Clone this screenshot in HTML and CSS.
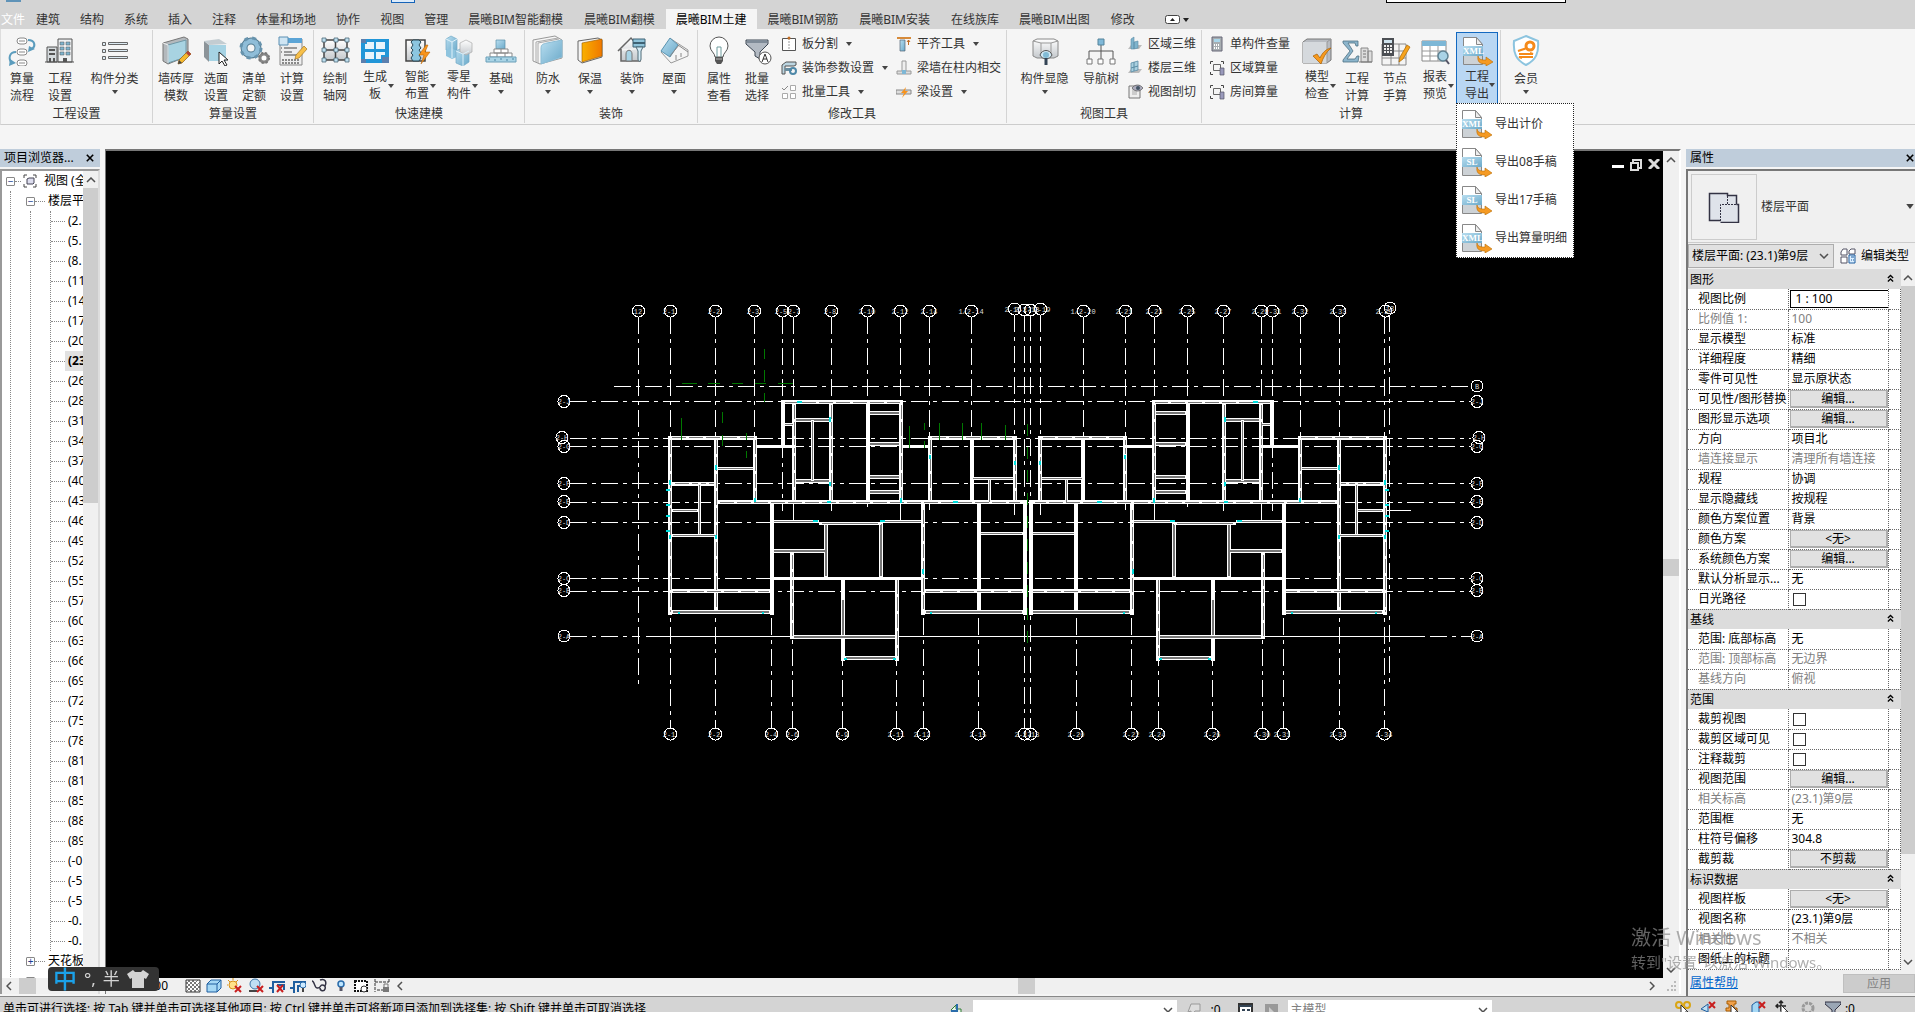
FILE: index.html
```html
<!DOCTYPE html>
<html lang="zh-CN">

<head>
    <meta charset="UTF-8">
    <meta name="viewport" content="width=device-width, initial-scale=1.0">
    <title>楼层平面: (23.1)第9层</title>
    <link rel="stylesheet" href="styles.css">
</head>

<body>
    <svg class="sprite" xmlns="http://www.w3.org/2000/svg">
        <defs>
            <linearGradient id="blue" x1="0" y1="0" x2="1" y2="1">
                <stop offset="0" stop-color="#b9def0" />
                <stop offset="1" stop-color="#6aa9c9" />
            </linearGradient>
            <linearGradient id="grey" x1="0" y1="0" x2="0" y2="1">
                <stop offset="0" stop-color="#fff" />
                <stop offset="1" stop-color="#c4c8cc" />
            </linearGradient>
            <linearGradient id="orange" x1="0" y1="0" x2="1" y2="0">
                <stop offset="0" stop-color="#f9b000" />
                <stop offset="1" stop-color="#f07800" />
            </linearGradient>
        </defs>

        <symbol id="flow" viewBox="0 0 32 32" fill="none">
            <g stroke="#888" fill="#fff"><rect x="11" y="4" width="10" height="6" rx="3" /><rect x="11" y="15" width="10" height="6" rx="3" /><rect x="11" y="26" width="10" height="6" rx="3" /></g>
            <path d="M13 7h6M13 18h6M13 29h6" stroke="#888" />
            <path d="M22 6c7 0 8 6 4 9M10 18c-7 0-8 7-4 11" stroke="#5b9cbd" stroke-width="2" />
            <path d="M29 15l-7 3 1-6zM10 29l-7 3 1-7z" fill="#5b9cbd" />
        </symbol>
        <symbol id="buildings" viewBox="0 0 32 32">
            <path d="M3 13h10v15H3z" fill="#d5dadd" stroke="#555" /><path d="M14 5h14v23H14z" fill="#eef1f3" stroke="#555" />
            <path d="M16 8h4v3h-4zM16 13h4v3h-4zM16 18h4v3h-4zM22 8h4v3h-4zM22 13h4v3h-4zM22 18h4v3h-4z" fill="#7db5d0" stroke="#555" stroke-width=".5" />
            <path d="M5 15h6v2H5zM5 19h6v2H5zM5 24h2v4H5zM9 24h2v4H9zM19 24h4v4h-4z" fill="#555" /><path d="M1 28h29" stroke="#555" />
        </symbol>
        <symbol id="list" viewBox="0 0 32 32">
            <g fill="#dceaf2" stroke="#666"><path d="M3.500 8.500h3v3h-3zM9.500 8.500h19v2h-19zM3.500 15.500h3v3h-3zM9.500 15.500h19v2h-19zM3.500 22.500h3v3h-3zM9.500 22.500h19v2h-19z" /></g>
        </symbol>
        <symbol id="wall" viewBox="0 0 32 32">
            <path d="M3 9l21-6 4 2v17l-20 8-5-3z" fill="#b4b9bd" stroke="#777" /><path d="M8 11l18-5v17L8 29z" fill="#a8d3e2" stroke="#6f97a6" /><path d="M3 9l5 2v18" fill="none" stroke="#eee" />
            <path d="M18 30l1-4 9-9 3 3-9 9z" fill="#f5b92e" stroke="#8a5a14" stroke-width=".7" /><path d="M18 30l1-4 3 3z" fill="#444" /><path d="M26 19l2-2 3 3-2 2z" fill="#b0403a" />
        </symbol>
        <symbol id="pickface" viewBox="0 0 32 32">
            <path d="M4 7l5 4v17l-5-5z" fill="#8c9499" /><path d="M4 7l15-2 8 5-18 1z" fill="#c3ccd1" /><path d="M9 11h17v16H9z" fill="#a6d3e4" />
            <path d="M19 18v12l3-3 3 5 2-1-3-5h4z" fill="#fff" stroke="#222" />
        </symbol>
        <symbol id="gears" viewBox="0 0 32 32">
            <circle cx="13" cy="14" r="7" fill="none" stroke="#537a90" stroke-width="7" /><circle cx="13" cy="14" r="7" fill="none" stroke="#8fbdd8" stroke-width="5" />
            <circle cx="13" cy="14" r="10" fill="none" stroke="#6793ad" stroke-width="3" stroke-dasharray="4 4" />
            <circle cx="26" cy="24" r="4" fill="#fff" stroke="#888" stroke-width="3" /><circle cx="26" cy="24" r="5" fill="none" stroke="#777" stroke-width="2" stroke-dasharray="2 2" />
        </symbol>
        <symbol id="calcset" viewBox="0 0 32 32">
            <path d="M4 5h22v26H4z" fill="#eee" stroke="#888" /><path d="M4 4h22v5H4z" fill="#5ba4d6" /><path d="M3 3h9v8H3z" fill="#cfe5f3" stroke="#5b8fb3" />
            <path d="M8 14h13M8 18h8M8 21h13M5 14h1M5 18h1" stroke="#999" stroke-width="2" /><path d="M6 26h18M6 29h18" stroke="#888" stroke-width="2" stroke-dasharray="2 1" />
            <path d="M19 25l1-4 8-9 3 3-8 9z" fill="#f7c04a" stroke="#a37420" stroke-width=".7" />
        </symbol>
        <symbol id="axisgrid" viewBox="0 0 32 32">
            <path d="M5 6h23v20H5zM16.500 6v20M5 16h23" fill="url(#grey)" stroke="#444" stroke-width="1.500" />
            <g fill="#bfe0f0" stroke="#4b6876" stroke-width=".8"><path d="M3 4h4v4H3zM15 4h4v4h-4zM26 4h4v4h-4zM3 14h4v4H3zM15 14h4v4h-4zM26 14h4v4h-4zM3 24h4v4H3zM15 24h4v4h-4zM26 24h4v4h-4z" /></g>
        </symbol>
        <symbol id="slab" viewBox="0 0 32 32">
            <path d="M2 5h28v24H2z" fill="#2196d8" /><path d="M2 5h5v4H2zM2 25h5v4H2zM23 23h7v6h-7z" fill="#5b7fae" />
            <path d="M8 8h7v7H6v-5h2zM17 8h9v7h-9zM6 18h9v7H6zM17 18h9v3h-4v4h-5z" fill="#e8f4fb" />
        </symbol>
        <symbol id="smart" viewBox="0 0 32 32">
            <path d="M5 6h19v21H5z" fill="url(#grey)" stroke="#444" stroke-width="1.500" /><path d="M12 6h6l2 2-2 3 2 3-2 2 2 3-2 2 2 3-2 3h-6l-2-3 2-3-2-2 2-3-2-2 2-3-2-3z" fill="#8cc6e0" stroke="#2b4a58" />
            <path d="M25 11l-7 10h5l-3 9 9-12h-5l3-7z" fill="#f7941d" stroke="#b35e00" stroke-width=".5" />
        </symbol>
        <symbol id="pieces" viewBox="0 0 32 32">
            <path d="M3 5l5-3 6 3v11l-5 3-6-3z" fill="url(#blue)" stroke="#72abc7" stroke-width=".7" /><path d="M3 16l5-2 6 3v6l-5 2-6-3z" fill="#8fc4de" />
            <path d="M13 17l6-3 7 3v11l-6 4-7-3z" fill="url(#blue)" stroke="#72abc7" stroke-width=".7" /><path d="M17 9l6-3 6 3v9l-6 3-6-3z" fill="url(#grey)" stroke="#aaa" stroke-width=".7" /><path d="M3 5l6 3 5-3M9 8v16M13 17l7 3 6-3M20 20v12" stroke="#dff1fa" fill="none" />
        </symbol>
        <symbol id="foundation" viewBox="0 0 32 32">
            <path d="M11 6h9v9h-9z" fill="url(#blue)" stroke="#5a8fa9" stroke-width=".7" /><path d="M9 15h14v4H9zM5 19h22v4H5z" fill="#fff" stroke="#888" /><path d="M16 15v4M12 19v4M20 19v4" stroke="#888" />
            <path d="M1 23h30v5H1z" fill="#a9d4e6" stroke="#6a9fb8" /><path d="M3 25h2m4 1h2m4-1h2m4 1h2m4-1h2" stroke="#4b86a4" />
        </symbol>
        <symbol id="waterproof" viewBox="0 0 32 32">
            <path d="M1 6l22-4 7 4v18L8 30l-7-3z" fill="#f7f7f7" stroke="#999" /><path d="M4 8l22-4M4 8v20M6 9l21-4M6 9v20" stroke="#aaa" fill="none" /><path d="M9 15c0-5 2-5 6-6l15-3v17L9 30z" fill="url(#blue)" stroke="#8bbdd6" />
        </symbol>
        <symbol id="insulate" viewBox="0 0 32 32">
            <path d="M4 7l20-3 4 2v17L8 29l-4-3z" fill="#f4f4f4" stroke="#666" /><path d="M8 9l20-4v17L8 28z" fill="url(#orange)" stroke="#9a5a00" stroke-width=".6" />
        </symbol>
        <symbol id="decor" viewBox="0 0 32 32">
            <path d="M2 17L15 4l10 11M5 15v12h19V14" fill="url(#grey)" stroke="#666" stroke-width="1.500" /><path d="M10 27v-7c0-5 6-5 6 0v7z" fill="#a9d4e6" stroke="#777" />
            <path d="M17 5h12v8H17z" fill="#8fc3da" stroke="#3f6274" /><path d="M17 9h12" stroke="#3f6274" stroke-width="2" /><path d="M20 13h7l-2 4v8c0 3-3 3-3 0v-8z" fill="#d7edf7" stroke="#4f6a77" />
        </symbol>
        <symbol id="roof" viewBox="0 0 32 32">
            <path d="M3 18l10 11 17-7v-6L13 5z" fill="#f5f5f5" stroke="#999" /><path d="M3 17L12 4l8 7-8 12z" fill="url(#blue)" stroke="#5a93b0" /><path d="M20 11l10 7M12 22l9-11M18 21v5M23 19v4" stroke="#888" fill="none" />
        </symbol>
        <symbol id="bulb" viewBox="0 0 32 32">
            <path d="M12 23c0-4-5-6-5-11a9 9 0 0118 0c0 5-5 7-5 11z" fill="#fff" stroke="#555" /><path d="M14 23V13h4v10" fill="none" stroke="#6f9c9e" /><path d="M12 23h8v4l-2 3h-4l-2-3z" fill="#555" /><path d="M13 25h6" stroke="#bbb" />
        </symbol>
        <symbol id="filterA" viewBox="0 0 32 32">
            <path d="M5 6h22v4l-8 8v7l-5-3v-4L5 10z" fill="#b3bac3" stroke="#3c4652" /><path d="M6 6h20v3H6z" fill="#7f8b98" />
            <circle cx="24" cy="24" r="6" fill="#fff" stroke="#555" /><path d="M21 28l3-8 3 8M22 25h4" fill="none" stroke="#333" />
        </symbol>
        <symbol id="showhide" viewBox="0 0 32 32">
            <path d="M4 7l4-2h17l4 2v15l-4 2H8l-4-2z" fill="url(#grey)" stroke="#888" /><path d="M4 7l8 2h10l7-2M12 9v13M22 9v13" stroke="#999" fill="none" />
            <path d="M11 21c2-6 10-6 12 0-2 5-10 5-12 0z" fill="#cfe8f4" stroke="#555" /><circle cx="17" cy="21" r="3" fill="#82bbd5" /><path d="M17 24v7" stroke="#345" stroke-width="3" />
        </symbol>
        <symbol id="navtree" viewBox="0 0 32 32">
            <path d="M16 11v6M4 25v-8h24v8M16 17v8" fill="none" stroke="#555" /><path d="M13 5h6v6h-6z" fill="#7fb8d8" stroke="#55839a" /><path d="M2 25h5v5H2zM13 25h5v5h-5zM25 25h5v5h-5z" fill="#fff" stroke="#777" />
        </symbol>
        <symbol id="modelcheck" viewBox="0 0 32 32">
            <path d="M2 8l4-3h24v21l-4 3H2z" fill="#b8bcc2" stroke="#777" /><path d="M2 8h24v21H2z" fill="#d5d9dd" /><path d="M26 8v21M26 8l4-3" stroke="#999" /><path d="M12 22l4-2 3 4c2-5 6-9 11-10-5 4-8 10-10 16z" fill="#f79a1e" stroke="#a85d00" stroke-width=".7" />
        </symbol>
        <symbol id="sigma" viewBox="0 0 32 32">
            <path d="M2 7h15v5h-2l-1-3H7l5 8-6 8h8l2-3h2l-1 6H2v-2l7-9-7-8z" fill="#8cb5cc" stroke="#4f7183" stroke-width=".8" />
            <path d="M20 14h7v14h-7zM27 17h4v11h-4z" fill="#ddd" stroke="#888" /><path d="M22 17h3M22 20h3M22 23h3" stroke="#777" /><path d="M18 28h13" stroke="#777" />
        </symbol>
        <symbol id="handcalc" viewBox="0 0 32 32">
            <path d="M3 10h24v21H3zM3 17h24M3 24h24M12 10v21M20 10v21" fill="#f4f4f4" stroke="#888" /><path d="M3 4h12v18H3z" fill="#4c4f54" /><path d="M5 6h8v3H5z" fill="#cfe3ee" /><path d="M5 12h8M5 15h8M5 18h8" stroke="#eee" stroke-width="2" stroke-dasharray="2 1" />
            <path d="M20 28l1-5 7-12 3 2-7 12z" fill="#f7a41e" stroke="#a86500" stroke-width=".7" />
        </symbol>
        <symbol id="report" viewBox="0 0 32 32">
            <path d="M3 7h24v20H3z" fill="#fff" stroke="#888" /><path d="M3 7h24v5H3z" fill="#7db7d6" /><path d="M3 17h24M3 22h24M11 12v15M19 12v15" stroke="#999" /><circle cx="24" cy="22" r="5" fill="#a9d3e6" stroke="#5f8292" stroke-width="1.500" /><path d="M27 26l3 4" stroke="#556" stroke-width="2" />
        </symbol>
        <symbol id="doc" viewBox="0 0 32 32">
            <path d="M2.500 3.500h13l6 7v20h-19z" fill="#fff" stroke="#888" /><path d="M15.500 3.500v7h6z" fill="#eee" stroke="#888" /><path d="M3 22h18v8H3z" fill="#cdd2d6" />
            <path d="M2 12h20v10H2z" fill="url(#blue)" /><path d="M17 22c1 4 4 4 8 4v-3l7 5-7 4v-2c-6 0-9-2-8-8z" fill="#f59a23" stroke="#b86b00" stroke-width=".6" />
        </symbol>
        <symbol id="member" viewBox="0 0 32 32">
            <path d="M16 2l12 5c1 12-2 19-12 24C6 26 3 19 4 7z" fill="#fff" stroke="#8cc4df" stroke-width="2" /><circle cx="20" cy="12" r="4" fill="none" stroke="#f58a1a" stroke-width="3" /><path d="M17 14l-9 3M9 20h14l-3-1M23 23H9l3 1" stroke="#f58a1a" stroke-width="2" fill="none" />
        </symbol>

        <symbol id="s-split" viewBox="0 0 16 16"><path d="M1.500 2.500h13v12h-13z" fill="#fff" stroke="#555" /><path d="M8 2v12" stroke="#999" stroke-dasharray="2 1" /><circle cx="8" cy="2" r="1.500" fill="#c06a20" /></symbol>
        <symbol id="s-param" viewBox="0 0 16 16"><path d="M1 5l4-3h10v3l-2 1H4v8H1z" fill="#bcd6e2" stroke="#555" /><path d="M4 8h7v3H4z" fill="#6a8ea0" /><circle cx="12" cy="11" r="3" fill="none" stroke="#4e88a8" stroke-width="2" /></symbol>
        <symbol id="s-batch" viewBox="0 0 16 16"><path d="M9.500 1.500h5v5h-5zM1.500 9.500h5v5h-5zM9.500 9.500h5v5h-5z" fill="#fff" stroke="#aaa" /><path d="M1 4l2 2 4-4" fill="none" stroke="#888" /></symbol>
        <symbol id="s-align" viewBox="0 0 16 16"><path d="M1 1h14v2H1z" fill="#d68a3a" /><path d="M4 4h5v11H4z" fill="url(#blue)" stroke="#567" stroke-width=".7" /><path d="M12.500 9V4M11 6l1.500-2L14 6" fill="none" stroke="#c06a20" /></symbol>
        <symbol id="s-cross" viewBox="0 0 16 16"><path d="M6 1h4v10H6z" fill="#eee" stroke="#999" /><path d="M1 11h14v3H1z" fill="#ddd" stroke="#999" /><path d="M6 10h4v4H6z" fill="#7db7d6" /></symbol>
        <symbol id="s-beam" viewBox="0 0 16 16"><path d="M0 6h15v4H0z" fill="#ddd" stroke="#888" /><path d="M10 3L5 9h3l-2 5 6-7H9z" fill="#f79420" /></symbol>
        <symbol id="s-area3d" viewBox="0 0 16 16"><path d="M1 13l3-4h11l-3 4z" fill="#bbb" /><path d="M4 3l3-2v12H4zM7 6l4-1v7l-4 1z" fill="#7fb4cd" stroke="#5a8ca4" stroke-width=".6" /></symbol>
        <symbol id="s-floor3d" viewBox="0 0 16 16"><path d="M1 13l3-4h11l-3 4z" fill="#bbb" /><path d="M4 3l7-2v9l-7 2z" fill="#a9d0e0" stroke="#5a8ca4" stroke-width=".8" /><path d="M4 8l7-2M7 2v9" stroke="#5a8ca4" /></symbol>
        <symbol id="s-cut" viewBox="0 0 16 16"><path d="M2 2h11v12H2z" fill="#eee" stroke="#777" /><path d="M5 5h5v6H5z" fill="#ccc" /><path d="M5 4c3-4 8-4 11 0-3 4-8 4-11 0z" fill="#aab" stroke="#555" stroke-width=".7" /><circle cx="11" cy="4" r="2" fill="#456" /></symbol>
        <symbol id="s-calc" viewBox="0 0 16 16"><path d="M3 1h10v14H3z" fill="#a7adb1" stroke="#667" /><path d="M5 3h6v3H5z" fill="#a9d6ea" /><path d="M5 9h6M5 12h6" stroke="#fff" stroke-width="2" stroke-dasharray="1 1" /></symbol>
        <symbol id="s-areacalc" viewBox="0 0 16 16"><path d="M1.500 4V1.500H4M12 1.500h2.500V4M1.500 12v2.500H4" fill="none" stroke="#444" /><path d="M4.500 4.500h7v6h-7z" fill="none" stroke="#666" /><path d="M11 8h4v7h-4z" fill="#99b" stroke="#556" stroke-width=".7" /></symbol>

        <symbol id="caret" viewBox="0 0 6 4"><path d="M0 0h6L3 4z" fill="#444" /></symbol>
        <symbol id="chev" viewBox="0 0 10 6"><path d="M1 5l4-4 4 4" fill="none" stroke="#505050" stroke-width="1.500" /></symbol>
        <symbol id="cross" viewBox="0 0 10 10"><path d="M1 1l8 8M9 1l-8 8" stroke="currentColor" stroke-width="2" /></symbol>
        <symbol id="collapse" viewBox="0 0 8 9"><path d="M1 4l3-3 3 3M1 8l3-3 3 3" fill="none" stroke="#000" stroke-width="1.500" /></symbol>
        <symbol id="pointer" viewBox="0 0 16 16"><path d="M6 5v10l2-2 2 3 2-1-2-3h3z" fill="#fff" stroke="#333" /></symbol>
    </svg>

    <header>
        <div class="quickbar">
            <span class="quick-logo"></span>
            <span class="quick-active"></span>
            <span class="quick-search"></span>
        </div>
        <nav class="tabs">
            <a class="tab file" href="#">文件</a>
            <a class="tab" href="#">建筑</a>
            <a class="tab" href="#">结构</a>
            <a class="tab" href="#">系统</a>
            <a class="tab" href="#">插入</a>
            <a class="tab" href="#">注释</a>
            <a class="tab" href="#">体量和场地</a>
            <a class="tab" href="#">协作</a>
            <a class="tab" href="#">视图</a>
            <a class="tab" href="#">管理</a>
            <a class="tab bim" href="#">晨曦BIM智能翻模</a>
            <a class="tab bim" href="#">晨曦BIM翻模</a>
            <a class="tab bim active" href="#">晨曦BIM土建</a>
            <a class="tab bim" href="#">晨曦BIM钢筋</a>
            <a class="tab bim" href="#">晨曦BIM安装</a>
            <a class="tab" href="#">在线族库</a>
            <a class="tab bim" href="#">晨曦BIM出图</a>
            <a class="tab" href="#">修改</a>
            <button class="ribbon-toggle" aria-label="最小化功能区">
                <svg width="24" height="9" viewBox="0 0 24 9"><rect x=".5" y=".5" width="14" height="8" rx="2" fill="#fff" stroke="#444" /><path d="M5 6h5L7.500 3zM18 3h6l-3 4z" fill="#222" /></svg>
            </button>
        </nav>

        <div class="ribbon">
            <section class="panel">
                <div class="tools">
                    <button class="big"><svg><use href="#flow" /></svg><span>算量<br>流程</span></button>
                    <button class="big"><svg><use href="#buildings" /></svg><span>工程<br>设置</span></button>
                    <button class="big xwide"><svg><use href="#list" /></svg><span>构件分类</span><svg class="caret"><use href="#caret" /></svg></button>
                </div>
                <h2>工程设置</h2>
            </section>
            <section class="panel">
                <div class="tools">
                    <button class="big drop"><svg><use href="#wall" /></svg><span>墙砖厚<br>模数</span></button>
                    <button class="big"><svg><use href="#pickface" /></svg><span>选面<br>设置</span></button>
                    <button class="big"><svg><use href="#gears" /></svg><span>清单<br>定额</span></button>
                    <button class="big"><svg><use href="#calcset" /></svg><span>计算<br>设置</span></button>
                </div>
                <h2>算量设置</h2>
            </section>
            <section class="panel">
                <div class="tools">
                    <button class="big"><svg><use href="#axisgrid" /></svg><span>绘制<br>轴网</span></button>
                    <button class="big drop split"><svg><use href="#slab" /></svg><span>生成<br>板</span><svg class="caret"><use href="#caret" /></svg></button>
                    <button class="big drop split"><svg><use href="#smart" /></svg><span>智能<br>布置</span><svg class="caret"><use href="#caret" /></svg></button>
                    <button class="big drop split"><svg><use href="#pieces" /></svg><span>零星<br>构件</span><svg class="caret"><use href="#caret" /></svg></button>
                    <button class="big drop"><svg><use href="#foundation" /></svg><span>基础</span><svg class="caret"><use href="#caret" /></svg></button>
                </div>
                <h2>快速建模</h2>
            </section>
            <section class="panel">
                <div class="tools">
                    <button class="big drop"><svg><use href="#waterproof" /></svg><span>防水</span><svg class="caret"><use href="#caret" /></svg></button>
                    <button class="big drop"><svg><use href="#insulate" /></svg><span>保温</span><svg class="caret"><use href="#caret" /></svg></button>
                    <button class="big drop"><svg><use href="#decor" /></svg><span>装饰</span><svg class="caret"><use href="#caret" /></svg></button>
                    <button class="big drop"><svg><use href="#roof" /></svg><span>屋面</span><svg class="caret"><use href="#caret" /></svg></button>
                </div>
                <h2>装饰</h2>
            </section>
            <section class="panel">
                <div class="tools">
                    <button class="big"><svg><use href="#bulb" /></svg><span>属性<br>查看</span></button>
                    <button class="big"><svg><use href="#filterA" /></svg><span>批量<br>选择</span></button>
                    <div class="stack">
                        <button><svg><use href="#s-split" /></svg>板分割<svg class="caret"><use href="#caret" /></svg></button>
                        <button><svg><use href="#s-param" /></svg>装饰参数设置<svg class="caret"><use href="#caret" /></svg></button>
                        <button><svg><use href="#s-batch" /></svg>批量工具<svg class="caret"><use href="#caret" /></svg></button>
                    </div>
                    <div class="stack">
                        <button><svg><use href="#s-align" /></svg>平齐工具<svg class="caret"><use href="#caret" /></svg></button>
                        <button><svg><use href="#s-cross" /></svg>梁墙在柱内相交</button>
                        <button><svg><use href="#s-beam" /></svg>梁设置<svg class="caret"><use href="#caret" /></svg></button>
                    </div>
                </div>
                <h2>修改工具</h2>
            </section>
            <section class="panel">
                <div class="tools">
                    <button class="big xwide"><svg><use href="#showhide" /></svg><span>构件显隐</span><svg class="caret"><use href="#caret" /></svg></button>
                    <button class="big drop"><svg><use href="#navtree" /></svg><span>导航树</span></button>
                    <div class="stack">
                        <button><svg><use href="#s-area3d" /></svg>区域三维</button>
                        <button><svg><use href="#s-floor3d" /></svg>楼层三维</button>
                        <button><svg><use href="#s-cut" /></svg>视图剖切</button>
                    </div>
                </div>
                <h2>视图工具</h2>
            </section>
            <section class="panel">
                <div class="tools">
                    <div class="stack lead">
                        <button><svg><use href="#s-calc" /></svg>单构件查量</button>
                        <button><svg><use href="#s-areacalc" /></svg>区域算量</button>
                        <button><svg><use href="#s-areacalc" /></svg>房间算量</button>
                    </div>
                    <button class="big drop split"><svg><use href="#modelcheck" /></svg><span>模型<br>检查</span><svg class="caret"><use href="#caret" /></svg></button>
                    <button class="big"><svg><use href="#sigma" /></svg><span>工程<br>计算</span></button>
                    <button class="big"><svg><use href="#handcalc" /></svg><span>节点<br>手算</span></button>
                    <button class="big drop split"><svg><use href="#report" /></svg><span>报表<br>预览</span><svg class="caret"><use href="#caret" /></svg></button>
                    <div class="menu-anchor">
                        <button class="big drop split open" aria-expanded="true"><span class="doc"><svg><use href="#doc" /></svg><b>XML</b></span><span>工程<br>导出</span><svg class="caret"><use href="#caret" /></svg></button>
                        <div class="export-menu">
                            <button><span class="doc"><svg><use href="#doc" /></svg><b>XML</b></span>导出计价</button>
                            <button><span class="doc"><svg><use href="#doc" /></svg><b>SL</b></span>导出08手稿</button>
                            <button><span class="doc"><svg><use href="#doc" /></svg><b>SL</b></span>导出17手稿</button>
                            <button><span class="doc"><svg><use href="#doc" /></svg><b>XML</b></span>导出算量明细</button>
                        </div>
                    </div>
                </div>
                <h2>计算</h2>
            </section>
            <section class="panel last">
                <div class="tools">
                    <button class="big drop"><svg><use href="#member" /></svg><span>会员</span><svg class="caret"><use href="#caret" /></svg></button>
                </div>
            </section>
        </div>
    </header>

    <main>
        <aside class="dock browser">
            <div class="dock-title"><span>项目浏览器...</span><button aria-label="关闭"><svg width="8" height="8"><use href="#cross" /></svg></button></div>
            <div class="browser-box">
                <div class="tree">
                    <div class="node root"><i class="box">−</i><i class="dots"></i><svg width="14" height="14" viewBox="0 0 14 14"><path d="M1 4V1h3M10 1h3v3M1 10v3h3M13 10v3h-3" fill="none" stroke="#444" /><path d="M4 5l2-1h5v5l-1 1H4z" fill="#dde" stroke="#445" /></svg><span>视图 (全</span></div>
                    <div class="level1">
                        <div class="node"><i class="box">−</i><i class="dots"></i><span>楼层平</span></div>
                        <div class="branch">
                            <ul>
                                <li>(2.</li>
                                <li>(5.</li>
                                <li>(8.</li>
                                <li>(11</li>
                                <li>(14</li>
                                <li>(17</li>
                                <li>(20</li>
                                <li class="current"><span>(23</span></li>
                                <li>(26</li>
                                <li>(28</li>
                                <li>(31</li>
                                <li>(34</li>
                                <li>(37</li>
                                <li>(40</li>
                                <li>(43</li>
                                <li>(46</li>
                                <li>(49</li>
                                <li>(52</li>
                                <li>(55</li>
                                <li>(57</li>
                                <li>(60</li>
                                <li>(63</li>
                                <li>(66</li>
                                <li>(69</li>
                                <li>(72</li>
                                <li>(75</li>
                                <li>(78</li>
                                <li>(81</li>
                                <li>(81</li>
                                <li>(85</li>
                                <li>(88</li>
                                <li>(89</li>
                                <li>(-0</li>
                                <li>(-5</li>
                                <li>(-5</li>
                                <li>-0.</li>
                                <li>-0.</li>
                            </ul>
                        </div>
                        <div class="node"><i class="box">+</i><i class="dots"></i><span>天花板</span></div>
                        <div class="node"><i class="box"></i></div>
                    </div>
                </div>
                <div class="vscroll tree-scroll"><svg class="arrow"><use href="#chev" /></svg><i class="thumb"></i></div>
                <div class="tree-hscroll"><svg class="arrow left"><use href="#chev" /></svg><i class="thumb"></i></div>
            </div>
        </aside>

        <section class="view">
            <div class="canvas">
                <svg class="plan" viewBox="106 151 1557 827" shape-rendering="crispEdges">
                    <!-- grid axes -->
                    <g class="axis">
                        <g id="axisHalf">
                            <path d="M670.500 317V728M715.500 317V728M754.500 317V440M782.500 317V511M793.500 317V520M831.500 317V511M867.500 317V507M900.500 317V520M929.500 317V510M971.500 317V440M1014.500 315V515M1024.500 315V728" />
                            <path d="M771.500 728V503M792.500 728V551M842.500 728V578M896.500 728V578M923.500 728V503M978.500 728V503" />
                        </g>
                        <use href="#axisHalf" transform="matrix(-1 0 0 1 2055 0)" />
                        <path d="M638.500 317V684M1389.500 315V684" />
                        <path d="M614 386.500H1470M570 401.500H1471M570 438.500H1471M570 446.500H1471M570 483.500H1471M570 502.500H1471M570 522.500H1471M570 578.500H1471M570 591.500H1471M570 636.500H640M1430 636.500H1471" />
                    </g>
                    <path d="M646 636.500H1425M1356 510.500H1411" stroke="#fff" />

                    <!-- walls, left unit mirrored to the right -->
                    <g id="unit" fill="none">
                        <path id="outer" stroke="#fff" stroke-width="4" d="M670 436V615M716 436V613M755 436V502M783 400V447M794 402V502M831 402V502M867.500 402V502M901 400V502M930 436V502M972 438V502M1015 436V502M1024.500 500V615M771.500 503V615M923 503V615M979 503V613M792 551V638M842.500 578V661M897 578V661M781 402H903M668 437.500H757M928 437.500H1017M716 502H1026M671 483.500H716M670 591H771M923 591H1024M670 612H771M923 612H1024M790 637H899M843 658H899M794 419.500H831M868 412.500H901M868 443.500H901M868 477H901M868 491.500H901M794 481H831M826 522V578M881 522V578M771 551H827" />
                        <path class="core" d="M670 440V612M716 440V610M755 440V500M794 405V500M831 405V500M901 405V500M930 440V500M1015 440V500M923 510V610M792 555V636M897 580V656M785 402H900M672 437.500H754M932 437.500H1012M720 502H1020M675 483.500H714M673 591H769M926 591H1022M771 578.500H922" />
                        <path stroke="#777" stroke-width="2" d="M673 612H769M926 612H1022M794 637H895M846 658H895M796 419.500H829M870 412.500H899M870 443.500H899M870 477H899M870 491.500H899M796 481H829M826 524V576M881 524V576M774 551H825M842.500 600V635" />
                        <path stroke="#fff" stroke-width="3" d="M699 483V535M812.500 420V481M989 478V502M784 424H793M717 468.500H754M972 478.500H1014M672 510.500H698M671 535.500H716M771 521.500H819M880 521.500H923M819 523.500H881M979 533.500H1024M756 446.500H795M902 446.500H930M771 578.500H922" />
                        <path stroke="#777" d="M699 485V534M812.500 421V480M989 480V502M785 424.500H793M718 468.500H753M973 478.500H1013M673 510.500H697M673 535.500H715M774 521.500H817M884 521.500H921M822 523.500H878M981 533.500H1022" />
                        <path stroke="#00dede" stroke-width="2" d="M797 402H802M716 465V470M755 498V502M670 480V485M670 535V539M716 535V539M830 417V422M830 482V486M827 502H831M953 502H958M901 498V503M813 521H818M880 521H885M930 455V459M1015 461V465M666 489.500H670M666 504.500H670M666 515.500H670M666 530.500H670M678 613H680M762 613H764M930 613H932M844 659H847M893 659H896M922.500 569V574" />
                    </g>
                    <use href="#unit" transform="matrix(-1 0 0 1 2055 0)" />

                    <path stroke="#007800" fill="none" d="M682 383.500H697M708 383.500H720M732 383.500H743M755 383.500H766M778 383.500H793M764.500 349V359M764.500 370V382M764.500 393V402M681.500 418V440M722.500 412V423M722.500 435V446M746.500 433V440M746.500 451V458M909.500 426V448M924.500 423V430M924.500 441V448M939.500 423V440M962.500 423V440M981.500 423V440M1005.500 425V440" />
                    <path stroke="#007800" stroke-dasharray="12 11" d="M1027.500 424V650" />

                    <!-- axis bubbles -->
                    <g class="bubbles">
                        <path d="M632.500 311a6 6 0 1012 0 6 6 0 10-12 0M664.500 311a6 6 0 1012 0 6 6 0 10-12 0M709.500 311a6 6 0 1012 0 6 6 0 10-12 0M748.500 311a6 6 0 1012 0 6 6 0 10-12 0M776.500 311a6 6 0 1012 0 6 6 0 10-12 0M787.500 311a6 6 0 1012 0 6 6 0 10-12 0M825.500 311a6 6 0 1012 0 6 6 0 10-12 0M861.500 311a6 6 0 1012 0 6 6 0 10-12 0M894.500 311a6 6 0 1012 0 6 6 0 10-12 0M923.500 311a6 6 0 1012 0 6 6 0 10-12 0M965.500 311a6 6 0 1012 0 6 6 0 10-12 0M1008.500 309a6 6 0 1012 0 6 6 0 10-12 0M1018.500 310a6 6 0 1012 0 6 6 0 10-12 0" />
                        <path d="M1024.500 310a6 6 0 1012 0 6 6 0 10-12 0M1034.500 309a6 6 0 1012 0 6 6 0 10-12 0M1077.500 311a6 6 0 1012 0 6 6 0 10-12 0M1119.500 311a6 6 0 1012 0 6 6 0 10-12 0M1148.500 311a6 6 0 1012 0 6 6 0 10-12 0M1181.500 311a6 6 0 1012 0 6 6 0 10-12 0M1217.500 311a6 6 0 1012 0 6 6 0 10-12 0M1255.500 311a6 6 0 1012 0 6 6 0 10-12 0M1266.500 311a6 6 0 1012 0 6 6 0 10-12 0M1294.500 311a6 6 0 1012 0 6 6 0 10-12 0M1333.500 311a6 6 0 1012 0 6 6 0 10-12 0M1379.500 311a6 6 0 1012 0 6 6 0 10-12 0M1384 308a6 6 0 1012 0 6 6 0 10-12 0" />
                        <g id="bottomBubbles"><path d="M664.500 734a6 6 0 1012 0 6 6 0 10-12 0M709.500 734a6 6 0 1012 0 6 6 0 10-12 0M765.500 734a6 6 0 1012 0 6 6 0 10-12 0M786.500 734a6 6 0 1012 0 6 6 0 10-12 0M836.500 734a6 6 0 1012 0 6 6 0 10-12 0M890.500 734a6 6 0 1012 0 6 6 0 10-12 0M917.500 734a6 6 0 1012 0 6 6 0 10-12 0M972.500 734a6 6 0 1012 0 6 6 0 10-12 0M1018.500 734a6 6 0 1012 0 6 6 0 10-12 0" /></g>
                        <use href="#bottomBubbles" transform="matrix(-1 0 0 1 2055 0)" />
                        <path id="rowBubbles" d="M558 401.500a6 6 0 1012 0 6 6 0 10-12 0M556 437.500a6 6 0 1012 0 6 6 0 10-12 0M558 446.500a6 6 0 1012 0 6 6 0 10-12 0M558 483.500a6 6 0 1012 0 6 6 0 10-12 0M558 501.500a6 6 0 1012 0 6 6 0 10-12 0M558 522.500a6 6 0 1012 0 6 6 0 10-12 0M558 578.500a6 6 0 1012 0 6 6 0 10-12 0M558 590.500a6 6 0 1012 0 6 6 0 10-12 0M558 636a6 6 0 1012 0 6 6 0 10-12 0" />
                        <use href="#rowBubbles" transform="matrix(-1 0 0 1 2041 0)" />
                        <path d="M1471 386a6 6 0 1012 0 6 6 0 10-12 0" />
                    </g>
                    <g class="marks">
                        <text x="638" y="314">12</text><text x="669" y="314">2-1</text><text x="714" y="314">2-2</text><text x="753" y="314">2-3</text><text x="781" y="314">2-5</text><text x="794" y="314">2-7</text><text x="830" y="314">2-8</text><text x="867" y="314">2-10</text><text x="900" y="314">2-12</text><text x="929" y="314">2-14</text><text x="971" y="314">1/2-14</text><text x="1013" y="312">2-16</text><text x="1023" y="312">2-17</text><text x="1031" y="312">2-18</text><text x="1042" y="312">2-19</text><text x="1083" y="314">1/2-20</text><text x="1124" y="314">2-21</text><text x="1154" y="314">2-23</text><text x="1187" y="314">2-25</text><text x="1223" y="314">2-27</text><text x="1260" y="314">2-29</text><text x="1273" y="314">2-31</text><text x="1300" y="314">2-32</text><text x="1338" y="314">2-33</text><text x="1384" y="314">2-35</text><text x="1390" y="311">13</text>
                        <text x="669" y="737">2-1</text><text x="714" y="737">2-2</text><text x="771" y="737">2-4</text><text x="792" y="737">2-6</text><text x="842" y="737">2-9</text><text x="896" y="737">2-11</text><text x="922" y="737">2-12</text><text x="978" y="737">2-15</text><text x="1023" y="737">2-17</text><text x="1031" y="737">2-18</text><text x="1076" y="737">2-20</text><text x="1131" y="737">2-22</text><text x="1157" y="737">2-24</text><text x="1212" y="737">2-26</text><text x="1262" y="737">2-30</text><text x="1282" y="737">2-31</text><text x="1338" y="737">2-33</text><text x="1384" y="737">2-34</text>
                        <text x="564" y="404">2-J</text><text x="562" y="440">2-H</text><text x="564" y="449">2-G</text><text x="564" y="486">2-F</text><text x="564" y="504">2-E</text><text x="564" y="525">2-D</text><text x="564" y="581">2-C</text><text x="564" y="593">2-B</text><text x="564" y="639">2-A</text>
                        <text x="1477" y="389">B</text><text x="1477" y="404">2-J</text><text x="1479" y="440">2-H</text><text x="1477" y="449">2-G</text><text x="1477" y="486">2-F</text><text x="1477" y="504">2-E</text><text x="1477" y="525">2-D</text><text x="1477" y="581">2-C</text><text x="1477" y="593">2-B</text><text x="1477" y="639">2-A</text>
                    </g>
                </svg>
                <div class="window-buttons">
                    <button aria-label="最小化"><svg width="12" height="10" viewBox="0 0 12 10"><path d="M0 6h12v3H0z" fill="#fff" /></svg></button>
                    <button aria-label="还原"><svg width="12" height="12" viewBox="0 0 12 12"><path d="M3 3V1h8v8H9M1 4h7v7H1z" fill="none" stroke="#ddd" stroke-width="2" /></svg></button>
                    <button aria-label="关闭视图"><svg width="12" height="10" viewBox="0 0 12 10"><path d="M1 0l10 10M11 0L1 10" stroke="#ddd" stroke-width="3" /></svg></button>
                </div>
            </div>
            <div class="vscroll view-scroll"><svg class="arrow"><use href="#chev" /></svg><i class="thumb"></i><svg class="arrow down"><use href="#chev" /></svg></div>
            <div class="view-bar">
                <span class="scale">1 : 100</span>
                <button aria-label="详细程度"><svg viewBox="0 0 16 16"><path d="M1 2h14v12H1z" fill="#fff" stroke="#333" /><path d="M1 6l4-4M1 10l8-8M1 14L13 2M5 14L15 4M9 14l6-6M3 2l12 12M7 2l8 8M1 4l10 10M1 8l6 6" stroke="#555" stroke-width=".8" /></svg></button>
                <button aria-label="视觉样式"><svg viewBox="0 0 16 16"><path d="M1 6l4-4h10v8l-4 4H1z" fill="#a5d8f5" stroke="#1f5fa0" /><path d="M1 6h10v8M11 6l4-4" fill="none" stroke="#1f5fa0" /></svg></button>
                <button aria-label="日光路径"><svg viewBox="0 0 16 16"><circle cx="6" cy="7" r="4" fill="#ffe28a" stroke="#d9921a" /><path d="M6 0v2M0 7h1M1 2l2 2M11 2L9 4" stroke="#d9921a" /><path d="M8 8l6 6M14 8l-6 6" stroke="#c81e1e" stroke-width="2" /></svg></button>
                <button aria-label="阴影"><svg viewBox="0 0 16 16"><circle cx="7" cy="6" r="5" fill="#bfe0f5" stroke="#3a75a8" /><path d="M1 13h8" stroke="#444" stroke-width="2" /><path d="M9 8l6 6M15 8l-6 6" stroke="#c81e1e" stroke-width="2" /></svg></button>
                <button aria-label="裁剪视图"><svg viewBox="0 0 16 16"><path d="M4 15V4h12M0 10h3M8 7h7v5" fill="none" stroke="#1f5fa0" stroke-width="2" /><path d="M8 7l6 7M14 7l-6 7" stroke="#c81e1e" stroke-width="2" /></svg></button>
                <button aria-label="显示裁剪区域"><svg viewBox="0 0 16 16"><path d="M4 15V4h12M0 10h3M8 14V8h3" fill="none" stroke="#1f5fa0" stroke-width="2" /><circle cx="13" cy="7" r="3" fill="#cdeaff" stroke="#2a6cab" /><path d="M13 10v4" stroke="#444" stroke-width="2" /></svg></button>
                <button aria-label="临时隐藏"><svg viewBox="0 0 16 16"><path d="M1 3c3 0 2 8 6 7 3 0 2-3 4-3s4 1 3 4-5 2-5-1M9 2c5-2 7 2 5 6" fill="none" stroke="#334" stroke-width="1.500" /></svg></button>
                <button aria-label="显示隐藏的图元"><svg viewBox="0 0 16 16"><circle cx="9" cy="6" r="3" fill="#bfe6ff" stroke="#2a6cab" stroke-width="1.500" /><path d="M9 9v4" stroke="#556" stroke-width="3" /></svg></button>
                <button aria-label="分析模型"><svg viewBox="0 0 16 16"><path d="M2 3h12v10H2z" fill="#fff" stroke="#111" stroke-width="2" stroke-dasharray="2 1" /><circle cx="11" cy="11" r="3" fill="#fff" stroke="#333" /></svg></button>
                <button aria-label="约束"><svg viewBox="0 0 16 16"><path d="M1 1v13M15 1v4M1 4h14M3 12h6" stroke="#333" fill="none" stroke-dasharray="3 1" /><path d="M9 9h6v5H9z" fill="#777" /><path d="M10 9V6h4v3" fill="none" stroke="#777" /></svg></button>
                <div class="hscroll"><svg class="arrow left"><use href="#chev" /></svg><i class="thumb"></i><svg class="arrow right"><use href="#chev" /></svg></div>
                <svg class="grip" width="10" height="10" viewBox="0 0 10 10"><path d="M7 0h2v2H7zM4 4h2v2H4zM7 4h2v2H7zM0 8h2v2H0zM4 8h2v2H4zM7 8h2v2H7z" fill="#bbb" /></svg>
            </div>
        </section>

        <aside class="dock properties">
            <div class="dock-title"><span>属性</span><button aria-label="关闭属性"><svg width="8" height="8"><use href="#cross" /></svg></button></div>
            <div class="prop-box">
                <div class="type-head">
                    <div class="type-thumb"><svg width="32" height="32" viewBox="0 0 32 32"><path d="M1.500 2.500h18v2h9v9h2v18h-18v-2h-11z" fill="#dfe3ea" /><path d="M12.500 29.500h-11v-27h18v2h9v9M12.500 31.500h18v-18h-2" fill="none" stroke="#334" stroke-width="1.500" /><path d="M19.500 5v8M12.500 30V13.500h17" fill="none" stroke="#334" stroke-dasharray="2 1" /></svg></div>
                    <span>楼层平面</span>
                    <svg class="caret"><use href="#caret" /></svg>
                </div>
                <div class="type-row">
                    <div class="combo type-combo"><select aria-label="类型"><option>楼层平面: (23.1)第9层</option></select><svg class="arrow down"><use href="#chev" /></svg></div>
                    <button><svg width="16" height="16" viewBox="0 0 16 16"><path d="M1 4l2-3h4v6H1zM9 3l2-2h4v5H9zM1 9h6v6H1z" fill="#fff" stroke="#556" /><path d="M9 7h6v8H9z" fill="#dcefff" stroke="#1f5fa0" /><path d="M11 9h3M11 12h1M13 12h1" stroke="#1f5fa0" /></svg>编辑类型</button>
                </div>
                <div class="prop-scroll">
                    <table>
                        <colgroup><col><col><col></colgroup>
                        <tr class="group"><th colspan="3">图形<svg><use href="#collapse" /></svg></th></tr>
                        <tr><td><label for="scale">视图比例</label></td><td class="edit"><input type="text" id="scale" value="1 : 100"></td><td></td></tr>
                        <tr class="off"><td>比例值 1:</td><td>100</td><td></td></tr>
                        <tr><td>显示模型</td><td>标准</td><td></td></tr>
                        <tr><td>详细程度</td><td>精细</td><td></td></tr>
                        <tr><td>零件可见性</td><td>显示原状态</td><td></td></tr>
                        <tr><td>可见性/图形替换</td><td class="edit"><button>编辑...</button></td><td></td></tr>
                        <tr><td>图形显示选项</td><td class="edit"><button>编辑...</button></td><td></td></tr>
                        <tr><td>方向</td><td>项目北</td><td></td></tr>
                        <tr class="off"><td>墙连接显示</td><td>清理所有墙连接</td><td></td></tr>
                        <tr><td>规程</td><td>协调</td><td></td></tr>
                        <tr><td>显示隐藏线</td><td>按规程</td><td></td></tr>
                        <tr><td>颜色方案位置</td><td>背景</td><td></td></tr>
                        <tr><td>颜色方案</td><td class="edit"><button>&lt;无&gt;</button></td><td></td></tr>
                        <tr><td>系统颜色方案</td><td class="edit"><button>编辑...</button></td><td></td></tr>
                        <tr><td>默认分析显示...</td><td>无</td><td></td></tr>
                        <tr><td><label for="sun">日光路径</label></td><td><input type="checkbox" id="sun"></td><td></td></tr>
                        <tr class="group"><th colspan="3">基线<svg><use href="#collapse" /></svg></th></tr>
                        <tr><td>范围: 底部标高</td><td>无</td><td></td></tr>
                        <tr class="off"><td>范围: 顶部标高</td><td>无边界</td><td></td></tr>
                        <tr class="off"><td>基线方向</td><td>俯视</td><td></td></tr>
                        <tr class="group"><th colspan="3">范围<svg><use href="#collapse" /></svg></th></tr>
                        <tr><td><label for="crop">裁剪视图</label></td><td><input type="checkbox" id="crop"></td><td></td></tr>
                        <tr><td><label for="cropVisible">裁剪区域可见</label></td><td><input type="checkbox" id="cropVisible"></td><td></td></tr>
                        <tr><td><label for="cropNote">注释裁剪</label></td><td><input type="checkbox" id="cropNote"></td><td></td></tr>
                        <tr><td>视图范围</td><td class="edit"><button>编辑...</button></td><td></td></tr>
                        <tr class="off"><td>相关标高</td><td>(23.1)第9层</td><td></td></tr>
                        <tr><td>范围框</td><td>无</td><td></td></tr>
                        <tr><td>柱符号偏移</td><td>304.8</td><td></td></tr>
                        <tr><td>截剪裁</td><td class="edit"><button>不剪裁</button></td><td></td></tr>
                        <tr class="group"><th colspan="3">标识数据<svg><use href="#collapse" /></svg></th></tr>
                        <tr><td>视图样板</td><td class="edit"><button>&lt;无&gt;</button></td><td></td></tr>
                        <tr><td>视图名称</td><td>(23.1)第9层</td><td></td></tr>
                        <tr class="off"><td>相关性</td><td>不相关</td><td></td></tr>
                        <tr><td>图纸上的标题</td><td></td><td></td></tr>
                    </table>
                    <div class="vscroll prop-bar"><svg class="arrow"><use href="#chev" /></svg><i class="thumb"></i><svg class="arrow down"><use href="#chev" /></svg></div>
                </div>
                <div class="prop-foot"><a href="#">属性帮助</a><button disabled>应用</button></div>
            </div>
        </aside>
    </main>

    <footer>
        <p>单击可进行选择; 按 Tab 键并单击可选择其他项目; 按 Ctrl 键并单击可将新项目添加到选择集; 按 Shift 键并单击可取消选择</p>
        <div class="worksets">
            <svg viewBox="0 0 16 16"><path d="M3 8l5-5v4h5v5H8v3z" fill="#eaf6ea" stroke="#2f7d32" /><path d="M9 2v9M3 9h6" stroke="#2a6cab" stroke-width="2" /></svg>
            <div class="combo"><select aria-label="工作集"><option></option></select><svg class="arrow down"><use href="#chev" /></svg></div>
            <svg viewBox="0 0 16 16"><path d="M5 2h9v7h-5l-4 5V9l-3 1z" fill="#ddd" stroke="#999" /></svg>
            <span class="count">:0</span>
            <svg viewBox="0 0 16 16"><path d="M1 2h13v12H1z" fill="#fff" stroke="#333" stroke-width="2" /><path d="M1 4h13M4 8h3M4 11h3M9 8h3M9 11h3" stroke="#345" stroke-width="2" /></svg>
            <svg viewBox="0 0 16 16"><path d="M2 2h13v14H2z" fill="#999" /><path d="M6 5v9l5-4z" fill="#ccc" /></svg>
            <div class="combo"><select aria-label="设计选项"><option>主模型</option></select><svg class="arrow down"><use href="#chev" /></svg></div>
        </div>
        <div class="select-tools">
            <button aria-label="选择链接"><svg viewBox="0 0 16 16"><circle cx="4" cy="5" r="3" fill="none" stroke="#d9a514" stroke-width="2" /><circle cx="12" cy="5" r="3" fill="none" stroke="#d9a514" stroke-width="2" /><use href="#pointer" /></svg></button>
            <button aria-label="选择基线图元"><svg viewBox="0 0 16 16"><path d="M1 9l7-5v8z" fill="#bfe0f5" stroke="#1f5fa0" /><path d="M9 2l6 6M15 2L9 8" stroke="#c81e1e" stroke-width="2" /></svg></button>
            <button aria-label="选择锁定图元"><svg viewBox="0 0 16 16"><path d="M2 1h9v3H9v4h3v3H1V8h3V4H2z" fill="#f0a04a" stroke="#a85d00" /><use href="#pointer" /></svg></button>
            <button aria-label="按面选择"><svg viewBox="0 0 16 16"><path d="M2 5l4-3h3v12H2z" fill="#a5d8f5" stroke="#1f5fa0" /><path d="M9 2l6 6M15 2L9 8" stroke="#c81e1e" stroke-width="2" /></svg></button>
            <button aria-label="选择时拖拽"><svg viewBox="0 0 16 16"><path d="M6 1v10M1 6h10M4 3l2-2 2 2M3 4L1 6l2 2" fill="none" stroke="#222" stroke-width="1.500" /><use href="#pointer" /></svg></button>
            <button aria-label="后台进程"><svg viewBox="0 0 16 16"><circle cx="8" cy="8" r="5" fill="none" stroke="#999" stroke-width="3" stroke-dasharray="3 1" /></svg></button>
            <button aria-label="过滤器"><svg viewBox="0 0 16 16"><path d="M0 2h16v2l-6 6v5l-3-2v-3L0 4z" fill="#9aa6b5" stroke="#334" /></svg></button>
            <span class="count">:0</span>
        </div>
    </footer>

    <div class="ime"><b>中</b><span>°,</span><span>半</span><svg width="22" height="18" viewBox="0 0 22 18"><path d="M6 0l2 2h6l2-2 6 4-3 5-2-1v10H5V8L3 9 0 4z" fill="#d4d4d4" /></svg></div>
    <div class="activate"><strong>激活 Windows</strong><span>转到"设置"以激活 Windows。</span></div>
</body>

</html>
```

FILE: styles.css
```css
* {
    box-sizing: border-box;
}

html,
body {
    margin: 0;
    height: 100%;
}

body {
    display: flex;
    flex-direction: column;
    overflow: hidden;
    background: #f5f5f5;
    color: #000;
    font-family: "Noto Sans", "Noto Sans CJK SC", sans-serif;
    font-size: 12px;
    line-height: 20px;
}

button,
input,
select {
    margin: 0;
    padding: 0;
    border: none;
    border-radius: 0;
    background: none;
    color: inherit;
    font: inherit;
}

i {
    font-style: normal;
}

svg {
    flex: none;
}

/* display: none would drop the gradients */
.sprite {
    position: absolute;
    width: 0;
    height: 0;
}

.caret {
    width: 6px;
    height: 4px;
}

/* title strip and tabs */
header {
    flex: none;
}

.quickbar {
    display: flex;
    height: 9px;
    padding: 0 349px 0 6px;
    background: #d4d4d4;
}

.quick-logo {
    width: 15px;
    height: 2px;
    background: #5f93b8;
}

.quick-active {
    width: 24px;
    height: 3px;
    margin-left: 370px;
    border: 1px solid #1563b8;
    border-top: none;
    background: #dcebfa;
}

.quick-search {
    width: 180px;
    height: 3px;
    margin-left: auto;
    border: 1px solid #000;
    border-top: none;
    background: #fff;
}

.tabs {
    display: flex;
    height: 20px;
    background: #d4d4d4;
}

.tab {
    padding: 0 10px;
    color: #333;
    line-height: 22px;
    text-decoration: none;
    white-space: nowrap;
}

.tab.file {
    padding: 0 1px;
    color: #fff;
}

.tab.bim {
    padding-right: 11px;
}

.tab.active {
    background: #f5f5f5;
    color: #000;
}

.ribbon-toggle {
    display: flex;
    align-items: center;
    margin-left: 20px;
}

/* ribbon */
.ribbon {
    display: flex;
    height: 96px;
    border-bottom: 1px solid #ccc;
    border-left: 1px solid #ddd;
}

.panel {
    display: flex;
    flex-direction: column;
    margin: 1px 0;
    padding: 0 2px;
    border-right: 1px solid #d4d4d4;
}

.panel.last {
    padding-left: 4px;
    border-right: none;
}

.panel h2 {
    margin: 0;
    color: #333;
    font-size: 12px;
    font-weight: normal;
    line-height: 20px;
    text-align: center;
}

.tools {
    display: flex;
    height: 75px;
    padding-top: 2px;
    color: #333;
}

.big {
    position: relative;
    display: flex;
    flex-direction: column;
    align-items: center;
    width: 38px;
    height: 72px;
    padding-top: 2px;
    line-height: 17px;
    white-space: nowrap;
}

.big > svg:first-child {
    width: 32px;
    height: 32px;
    margin-bottom: 4px;
}

.big.drop {
    width: 42px;
}

.big.xwide {
    width: 71px;
}

.big > .caret {
    margin-top: 3px;
}

.big.split > svg:first-child {
    margin-bottom: 2px;
}

.split > .caret {
    position: absolute;
    right: 2px;
    bottom: 16px;
}

.big.open {
    padding-top: 1px;
    border: 1px solid #1469c0;
    background: #b9d7f3;
}

.doc {
    position: relative;
    width: 32px;
    height: 34px;
}

.doc svg {
    width: 32px;
    height: 32px;
}

.doc b {
    position: absolute;
    top: 12px;
    left: 2px;
    width: 20px;
    color: #fff;
    font: bold 9px/10px "Liberation Serif", serif;
    text-align: center;
}

.stack {
    display: flex;
    flex-direction: column;
    margin: 0 3px 0 5px;
}

.stack.lead {
    margin-right: 6px;
}

.stack button {
    display: flex;
    align-items: center;
    gap: 5px;
    height: 24px;
    white-space: nowrap;
}

.stack svg:first-child {
    width: 16px;
    height: 16px;
}

.stack .caret {
    margin-left: 3px;
}

.menu-anchor {
    position: relative;
}

.export-menu {
    position: absolute;
    z-index: 5;
    top: 71px;
    left: 0;
    width: 118px;
    padding-bottom: 1px;
    border: 1px dotted #222;
    background: #fff;
}

.export-menu button {
    display: flex;
    align-items: center;
    gap: 3px;
    height: 38px;
    padding-left: 3px;
    padding-top: 2px;
    white-space: nowrap;
}

/* work area */
main {
    display: grid;
    grid-template-columns: 100px 1fr 229px;
    grid-template-rows: 1fr;
    column-gap: 5px;
    flex: 1;
    min-height: 0;
    padding-top: 24px;
}

.dock {
    display: flex;
    flex-direction: column;
    min-height: 0;
}

.dock-title {
    display: flex;
    justify-content: space-between;
    align-items: center;
    height: 18px;
    margin-bottom: 2px;
    padding: 0 6px 0 4px;
    background: #bfcddb;
    white-space: nowrap;
}

.properties .dock-title {
    padding-right: 1px;
}

.dock-title button {
    display: flex;
}

.arrow {
    width: 10px;
    height: 6px;
}

.arrow.down {
    transform: rotate(180deg);
}

.arrow.left {
    transform: rotate(-90deg);
}

.arrow.right {
    transform: rotate(90deg);
}

.vscroll {
    display: flex;
    flex-direction: column;
    align-items: center;
    background: #f0f0f0;
}

.vscroll .arrow {
    margin: 6px 0 5px;
}

.vscroll .thumb {
    width: 100%;
    background: #cdcdcd;
}

.vscroll .down {
    margin-top: auto;
}

/* project browser */
.browser-box {
    display: grid;
    grid-template: 1fr 16px / 1fr 15px;
    flex: 1;
    min-height: 0;
    margin-bottom: 2px;
    border: 2px solid #999;
    border-right-color: #ddd;
    border-bottom: none;
    background: #fff;
}

.tree {
    overflow: hidden;
    white-space: nowrap;
}

.node {
    display: flex;
    align-items: center;
    height: 20px;
    padding-left: 15px;
}

.node.root {
    padding-left: 4px;
}

.node.root svg {
    margin-right: 7px;
}

.box {
    flex: none;
    width: 9px;
    height: 9px;
    border: 1px solid #888;
    border-radius: 1px;
    background: #fff;
    color: #1b3d8f;
    font-size: 10px;
    line-height: 7px;
    text-align: center;
    z-index: 1;
}

.dots {
    flex: none;
    width: 6px;
    margin-right: 2px;
    border-top: 1px dotted #888;
}

.level1 .dots {
    width: 10px;
    margin-right: 3px;
}

.level1 {
    margin-left: 8px;
    border-left: 1px dotted #888;
}

.branch {
    margin-left: 19px;
    border-left: 1px dotted #888;
}

.branch ul {
    margin: 0 0 0 19px;
    padding: 0;
    border-left: 1px dotted #888;
    list-style: none;
}

.branch li {
    display: flex;
    align-items: center;
    height: 20px;
    gap: 3px;
}

.branch li::before {
    content: "";
    flex: none;
    width: 14px;
    border-top: 1px dotted #888;
}

.branch .current {
    gap: 0;
    font-weight: bold;
}

.current span {
    padding-left: 3px;
    background: #e1e1e1;
}

.tree-scroll .thumb {
    height: 39%;
}

.tree-hscroll {
    display: flex;
    align-items: center;
    grid-column: 1 / 3;
    gap: 5px;
    padding-left: 2px;
    background: #f0f0f0;
}

.tree-hscroll .thumb {
    width: 17px;
    height: 16px;
    background: #cdcdcd;
}

/* drawing view */
.view {
    display: grid;
    grid-template: 1fr 16px / 1fr 16px;
    min-width: 0;
    margin-bottom: 2px;
    border: solid #777;
    border-width: 2px 2px 0 1px;
    border-right-color: #fff;
}

.canvas {
    position: relative;
    min-height: 0;
    background: #000;
}

.plan {
    position: absolute;
    width: 100%;
    height: 100%;
}

.axis {
    fill: none;
    stroke: #fff;
    stroke-dasharray: 17 5 4 5;
}

.core {
    stroke: #777;
    stroke-dasharray: 14 3;
}

.bubbles {
    fill: none;
    stroke: #fff;
}

.marks {
    fill: #ddd;
    font-family: "Liberation Mono", monospace;
    font-size: 7px;
    text-anchor: middle;
}

.window-buttons {
    position: absolute;
    top: 8px;
    right: 3px;
    display: flex;
    gap: 6px;
}

.window-buttons button {
    display: flex;
}

.view-scroll {
    grid-row: 1;
    grid-column: 2;
}

.view-scroll .thumb {
    height: 17px;
    margin-top: auto;
}

.view-bar {
    display: flex;
    align-items: center;
    grid-column: 1 / 3;
    gap: 5px;
    padding-left: 22px;
    background: #f0f0f0;
}

.view-bar .scale {
    width: 40px;
    margin-right: 12px;
    text-align: right;
    white-space: nowrap;
}

.view-bar button {
    display: flex;
}

.view-bar button svg {
    width: 16px;
    height: 16px;
}

.hscroll {
    display: flex;
    flex: 1;
    align-items: center;
    justify-content: space-between;
    height: 16px;
}

.hscroll .thumb {
    width: 17px;
    height: 16px;
    background: #cdcdcd;
}

.grip {
    margin: 0 2px 0 5px;
}

/* properties */
.prop-box {
    display: flex;
    flex-direction: column;
    flex: 1;
    min-height: 0;
    border-top: 2px solid #777;
    border-left: 2px solid #777;
    background: #f0f0f0;
    white-space: nowrap;
}

.type-head {
    display: flex;
    align-items: center;
    height: 72px;
    padding: 0 1px 0 3px;
    border-bottom: 1px solid #ccc;
    color: #333;
}

.type-head .caret {
    width: 8px;
    height: 5px;
    margin-left: auto;
}

.type-thumb {
    display: flex;
    align-items: center;
    justify-content: center;
    width: 66px;
    height: 66px;
    margin-right: 4px;
    border: 1px solid #ccc;
}

.type-row {
    display: flex;
    align-items: center;
    gap: 6px;
    height: 26px;
}

.type-row button {
    display: flex;
    align-items: center;
    gap: 5px;
}

.combo {
    position: relative;
    display: flex;
    align-items: center;
    background: #fff;
}

.combo select {
    width: 100%;
    height: 100%;
    padding-left: 3px;
    appearance: none;
}

.combo .arrow {
    position: absolute;
    right: 4px;
}

.type-combo {
    width: 146px;
    height: 24px;
    border: 1px solid #adadad;
    background: #e1e1e1;
}

.prop-scroll {
    display: flex;
    flex: 1;
    min-height: 0;
    overflow: hidden;
}

table {
    width: 213px;
    height: 700px;
    border-collapse: collapse;
    table-layout: fixed;
    background: #fff;
}

col:nth-child(1) {
    width: 100px;
}

col:nth-child(2) {
    width: 100px;
}

tr {
    height: 20px;
}

td {
    height: 20px;
    padding: 0 0 0 3px;
    border-right: 1px dotted #666;
    border-bottom: 1px dotted #666;
    line-height: 18px;
    overflow: hidden;
}

td:first-child {
    padding-left: 10px;
}

td.edit {
    padding: 0 0 0 1px;
}

.off td {
    color: #808080;
}

th {
    padding: 0 7px 0 2px;
    background: #dcdcdc;
    font-weight: normal;
    line-height: 19px;
    text-align: left;
}

th svg {
    float: right;
    width: 7px;
    height: 9px;
    margin-top: 4px;
}

td button {
    display: block;
    width: 98px;
    height: 18px;
    border: 1px solid #adadad;
    border-right-width: 2px;
    border-bottom-width: 2px;
    background: #e1e1e1;
    line-height: 15px;
}

td input[type="text"] {
    display: block;
    width: 99px;
    height: 18px;
    padding-left: 5px;
    border: 1px solid #000;
}

td input[type="checkbox"] {
    display: block;
    width: 13px;
    height: 13px;
    margin: 1px 0 0 1px;
    border: 1px solid #333;
    background: #fff;
    appearance: none;
}

.prop-bar {
    flex: 1;
}

.prop-bar .thumb {
    flex: 0 0 81%;
}

.prop-foot {
    display: flex;
    align-items: center;
    justify-content: space-between;
    height: 26px;
    padding-left: 2px;
}

.prop-foot a {
    color: #0066cc;
}

.prop-foot button {
    width: 72px;
    height: 19px;
    border: 1px solid #bfbfbf;
    background: #ccc;
    color: #838383;
    line-height: 17px;
}

/* status bar */
footer {
    display: flex;
    align-items: flex-start;
    flex: none;
    height: 16px;
    padding: 3px 60px 0 3px;
    border-top: 1px solid #888;
    background: #d4d4d4;
    line-height: 18px;
    white-space: nowrap;
    overflow: hidden;
}

footer p {
    flex: 0 0 51%;
    margin: 0;
}

footer svg:not(.arrow) {
    width: 16px;
    height: 16px;
}

.worksets {
    display: flex;
    align-items: center;
    gap: 9px;
}

.worksets .combo {
    width: 204px;
    height: 20px;
}

.worksets .combo select {
    color: #808080;
}

.worksets .count {
    width: 18px;
}

.select-tools {
    display: flex;
    gap: 9px;
    margin-left: auto;
}

.select-tools .count {
    margin-left: -5px;
}

.select-tools button {
    display: flex;
}

/* input method bar and system notice float over the window */
.ime {
    position: fixed;
    left: 48px;
    bottom: 21px;
    z-index: 6;
    display: flex;
    align-items: center;
    gap: 7px;
    width: 111px;
    height: 24px;
    padding-left: 5px;
    border-radius: 4px;
    background: #333;
    color: #d4d4d4;
    font-size: 17px;
}

.ime b {
    color: #1ba1e8;
    font-size: 24px;
    font-weight: 500;
    line-height: 24px;
}

.activate {
    position: fixed;
    right: 90px;
    bottom: 38px;
    z-index: 6;
    display: flex;
    flex-direction: column;
    width: 194px;
    color: rgba(140, 140, 140, .7);
    font-size: 15px;
    line-height: 24px;
    white-space: nowrap;
    pointer-events: none;
}

.activate strong {
    font-size: 20px;
    font-weight: normal;
}
```
